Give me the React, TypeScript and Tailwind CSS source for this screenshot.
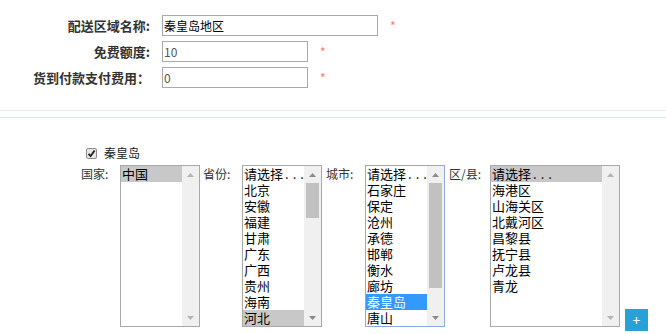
import React from "react";

const FONT = "font-['Noto_Sans_CJK_SC','Noto_Sans',sans-serif]";

function Arrow({ up, color }: { up?: boolean; color: string }) {
  return (
    <div className="h-[17px] w-[17px] flex items-center justify-center shrink-0">
      <svg width="7" height="4" viewBox="0 0 7 4">
        {up ? <polygon points="0,4 7,4 3.5,0" fill={color} /> : <polygon points="0,0 7,0 3.5,4" fill={color} />}
      </svg>
    </div>
  );
}

function ScrollBar({ thumb, active }: { thumb?: number; active?: boolean }) {
  const c = active ? "#8a8a8a" : "#b4b4b4";
  return (
    <div className="w-[17px] h-full bg-[#f0f0f0] flex flex-col shrink-0">
      <Arrow up color={c} />
      <div className="flex-1 flex flex-col px-[2px]">
        {thumb ? <div className="bg-[#c1c1c1] w-[13px]" style={{ height: thumb }} /> : null}
      </div>
      <Arrow color={c} />
    </div>
  );
}

type Opt = { t: string; sel?: "gray" | "blue"; dots?: boolean };

function ListBox({ w, opts, thumb, active, focus }: { w: string; opts: Opt[]; thumb?: number; active?: boolean; focus?: boolean }) {
  return (
    <div className={`${w} h-[162px] border ${focus ? "border-[#8aaae2]" : "border-[#a9a9a9]"} flex bg-white shrink-0`}>
      <div className="flex-1 overflow-hidden flex flex-col">
        {opts.map((o, i) => (
          <div
            key={i}
            className={`h-[16px] leading-[16px] text-[13px] pl-[1px] whitespace-nowrap ${
              o.sel === "gray" ? "bg-[#c8c8c8] text-black" : o.sel === "blue" ? "bg-[#3399ff] text-white" : "text-black"
            }`}
          >
            {o.t}
            {o.dots ? <span className="tracking-[4px] pl-[2px]">...</span> : null}
          </div>
        ))}
      </div>
      <ScrollBar thumb={thumb} active={active} />
    </div>
  );
}

function Label({ children, ml, w }: { children: React.ReactNode; ml: string; w: string }) {
  return <div className={`${ml} ${w} shrink-0 text-[12px] leading-[16px] pt-[1px] text-[#333]`}>{children}</div>;
}

function Row({ label, value, w, dark }: { label: string; value: string; w: string; dark?: boolean }) {
  return (
    <div className="flex items-center h-[21px]">
      <div className="w-[150px] text-right text-[13px] font-bold text-[#333] leading-[21px]">{label}</div>
      <div
        className={`ml-[12px] ${w} h-[21px] border border-[#a9a9a9] pl-[1px] text-[12px] leading-[19px] ${
          dark ? "text-black" : "text-[#555]"
        }`}
      >
        {value}
      </div>
      <div className="ml-[12px] text-[12px] text-[#f77] leading-[21px]">*</div>
    </div>
  );
}

export default function App() {
  const province: Opt[] = [
    { t: "请选择", dots: true },
    { t: "北京" },
    { t: "安徽" },
    { t: "福建" },
    { t: "甘肃" },
    { t: "广东" },
    { t: "广西" },
    { t: "贵州" },
    { t: "海南" },
    { t: "河北", sel: "gray" },
  ];
  const city: Opt[] = [
    { t: "请选择", dots: true },
    { t: "石家庄" },
    { t: "保定" },
    { t: "沧州" },
    { t: "承德" },
    { t: "邯郸" },
    { t: "衡水" },
    { t: "廊坊" },
    { t: "秦皇岛", sel: "blue" },
    { t: "唐山" },
  ];
  const district: Opt[] = [
    { t: "请选择", dots: true, sel: "gray" },
    { t: "海港区" },
    { t: "山海关区" },
    { t: "北戴河区" },
    { t: "昌黎县" },
    { t: "抚宁县" },
    { t: "卢龙县" },
    { t: "青龙" },
  ];
  return (
    <div className={`w-[666px] h-[334px] bg-white overflow-hidden ${FONT}`}>
      <div className="pt-[15px] pb-[22px] border-b border-[#dfeef5] flex flex-col gap-[5px]">
        <Row label="配送区域名称:" value="秦皇岛地区" w="w-[216px]" dark />
        <Row label="免费额度:" value="10" w="w-[146px]" />
        <Row label="货到付款支付费用：" value="0" w="w-[146px]" />
      </div>
      <div className="mt-[6px] border-t border-[#dde9e9]">
        <div className="pt-[27px] pl-[86px] h-[43px] flex items-end">
          <div className="h-[16px] flex items-center gap-[7px]">
            <div className="w-[11px] h-[11px] border border-[#8c8c8c] rounded-[2px] bg-[#e6e6e6] flex items-center justify-center">
              <svg width="9" height="9" viewBox="0 0 9 9">
                <path d="M1.5 4.8 L3.6 7 L7.6 1.5" stroke="#222" strokeWidth="1.8" fill="none" />
              </svg>
            </div>
            <span className="text-[12px] text-[#222] leading-[16px]">秦皇岛</span>
          </div>
        </div>
        <div className="mt-[4px] pl-[81px] flex items-start">
          <Label ml="ml-0" w="w-[39px]">国家:</Label>
          <ListBox w="w-[80px]" opts={[{ t: "中国", sel: "gray" }]} />
          <Label ml="ml-[3px]" w="w-[39px]">省份:</Label>
          <ListBox w="w-[80px]" opts={province} thumb={35} active />
          <Label ml="ml-[4px]" w="w-[39px]">城市:</Label>
          <ListBox w="w-[80px]" opts={city} thumb={105} active focus />
          <Label ml="ml-[4px]" w="w-[41px]">区/县:</Label>
          <ListBox w="w-[130px]" opts={district} />
          <div className="ml-[5px] mt-[144px] w-[23px] h-[22px] bg-[#29a0d8] text-white flex items-center justify-center text-[14px] leading-none">
            +
          </div>
        </div>
      </div>
    </div>
  );
}
